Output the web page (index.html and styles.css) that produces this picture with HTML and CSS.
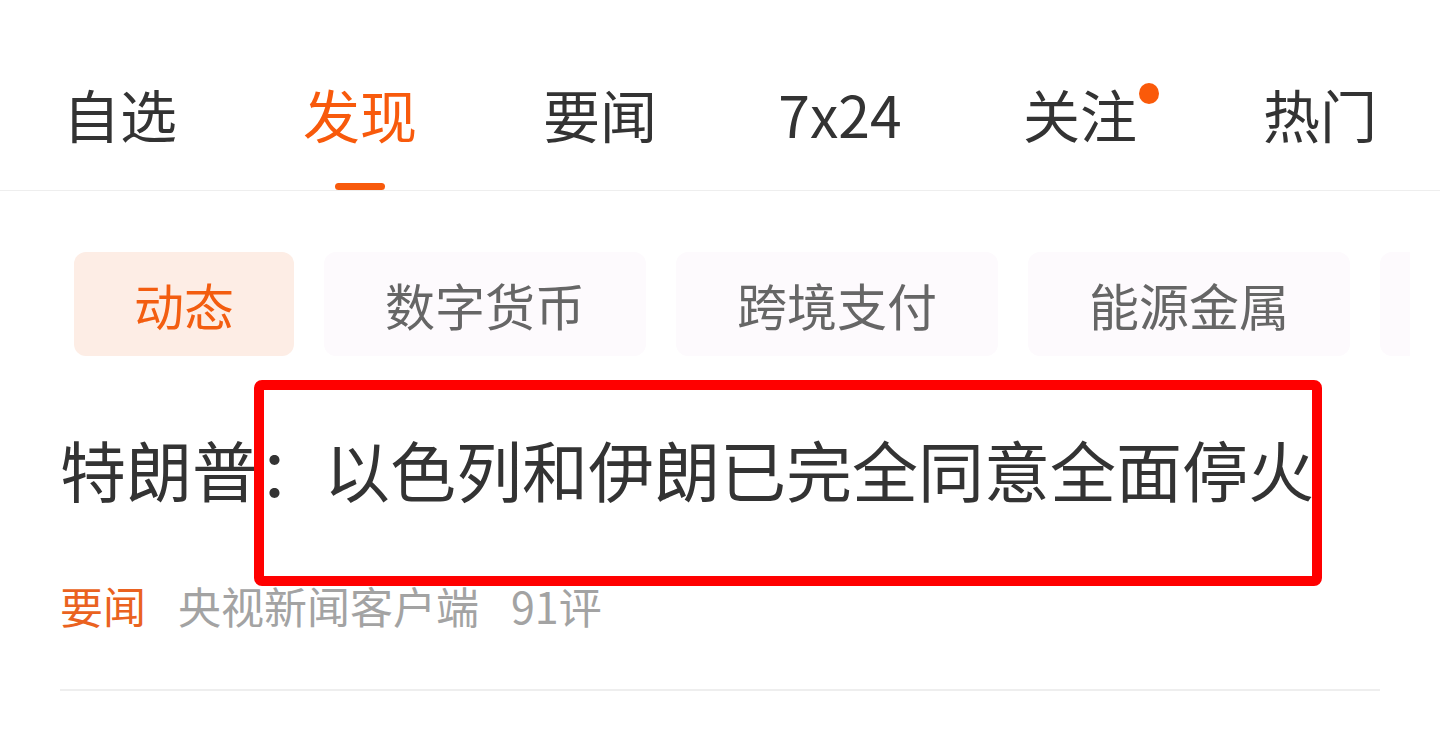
FILE: index.html
```html
<!DOCTYPE html>
<html lang="zh-CN">
<head>
    <meta charset="UTF-8">
    <meta name="viewport" content="width=device-width, initial-scale=1.0">
    <title>发现</title>
    <link rel="stylesheet" href="styles.css">
</head>
<body>
    <!-- Top channel tabs -->
    <nav class="tabs">
        <div class="tab"><span class="tab-label">自选</span></div>
        <div class="tab active"><span class="tab-label">发现</span><span class="tab-bar"></span></div>
        <div class="tab"><span class="tab-label">要闻</span></div>
        <div class="tab"><span class="tab-label">7x24</span></div>
        <div class="tab"><span class="tab-label has-dot">关注</span></div>
        <div class="tab"><span class="tab-label">热门</span></div>
    </nav>

    <div class="chips">
        <div class="chip active">动态</div>
        <div class="chip">数字货币</div>
        <div class="chip">跨境支付</div>
        <div class="chip">能源金属</div>
        <div class="chip chip-more"></div>
    </div>

    <!-- News list -->
    <div class="news">
        <div class="news-item">
            <h3 class="news-title">特朗普：以色列和伊朗已完全同意全面停火</h3>
            <div class="news-meta">
                <span class="tag">要闻</span>
                <span>央视新闻客户端</span>
                <span>91评</span>
            </div>
            <div class="highlight"></div>
        </div>
    </div>
</body>
</html>
```

FILE: styles.css
```css
body {
    margin: 0;
    background: #fff;
    font-family: "Noto Sans CJK SC", "Noto Sans", sans-serif;
    color: #333;
}
.tabs {
    display: grid;
    grid-template-columns: repeat(6, 1fr);
    border-bottom: 1px solid #eee;
}
.tab {
    display: flex;
    flex-direction: column;
    align-items: center;
    height: 190px;
    padding-top: 85px;
    box-sizing: border-box;
}
.tab-label {
    position: relative;
    font-size: 57px;
    line-height: 57px;
    color: #333;
}
.tab.active .tab-label {
    color: #f85a0c;
}
.tab-bar {
    width: 50px;
    height: 7px;
    margin-top: auto;
    border-radius: 4px;
    background: #f85a0c;
}
.has-dot::after {
    content: "";
    position: absolute;
    top: -2px;
    right: -22px;
    width: 20px;
    height: 21px;
    border-radius: 50%;
    background: #fa5a0a;
}
.chips {
    display: flex;
    gap: 30px;
    width: 1410px;
    padding: 61px 0 0 74px;
    box-sizing: border-box;
    overflow: hidden;
}
.chip {
    flex-shrink: 0;
    height: 104px;
    line-height: 104px;
    padding: 0 61px;
    border-radius: 12px;
    background: #fdfafd;
    color: #666;
    font-size: 50px;
}
.chip.active {
    background: #fdede5;
    color: #f35d10;
    padding: 0 60px;
}
.chip-more {
    width: 200px;
}
.news {
    margin: 0 60px;
}
.news-item {
    position: relative;
    padding: 67px 0 59px;
    border-bottom: 2px solid #eee;
}
.news-title {
    margin: 0;
    font-size: 66px;
    line-height: 90px;
    font-weight: normal;
    color: #333;
    white-space: nowrap;
}
.news-meta {
    display: flex;
    gap: 32px;
    margin-top: 67px;
    font-size: 43px;
    line-height: 50px;
    color: #a3a3a3;
}
.tag {
    color: #ea6220;
}
.highlight {
    position: absolute;
    top: 24px;
    left: 194px;
    width: 1068px;
    height: 206px;
    box-sizing: border-box;
    border: 10px solid #ff0000;
    border-radius: 8px;
}
```
